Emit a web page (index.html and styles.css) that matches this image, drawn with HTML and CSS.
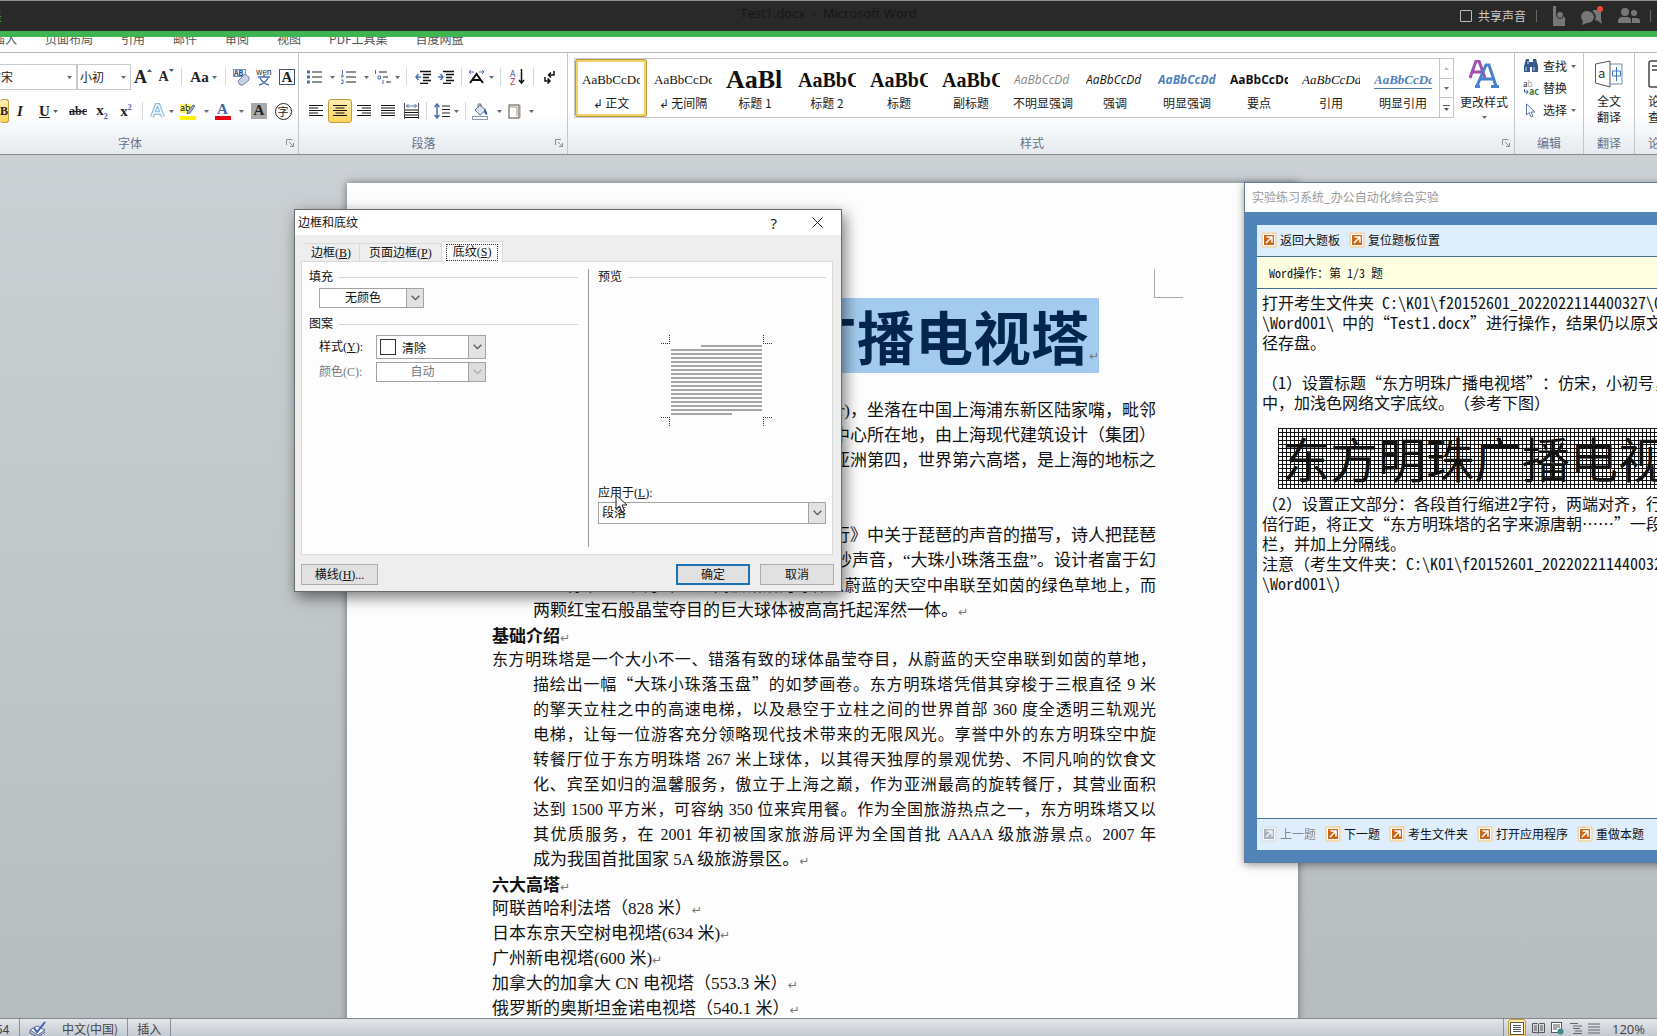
FILE: index.html
```html
<!DOCTYPE html>
<html lang="zh-CN">
<head>
<meta charset="utf-8">
<title>Test1.docx - Microsoft Word</title>
<link rel="stylesheet" href="styles.css">
</head>
<body>
<svg width="0" height="0" class="defs" aria-hidden="true">
  <symbol id="caret" viewBox="0 0 5 3"><path d="M0 0h5L2.500 3z" fill="#666b73"/></symbol>
  <symbol id="chev" viewBox="0 0 9 6"><path d="M.7.8 4.500 4.600 8.300.8" fill="none" stroke="currentColor" stroke-width="1.300"/></symbol>
  <symbol id="launch" viewBox="0 0 8 8"><path d="M.5 6V.5H6M3 3l4 4M7.500 4v3.500H4" fill="none" stroke="#8a919b"/></symbol>
  <symbol id="go" viewBox="0 0 16 16"><rect width="16" height="16" rx="2" fill="#f3d9b8"/><rect x="2" y="2" width="12" height="12" fill="#fff"/><rect x="3" y="3" width="10" height="10" fill="#c9681a"/><path d="M5.500 5H11v5.500M11 5 5 11" fill="none" stroke="#fff" stroke-width="1.500"/></symbol>
</svg>

<header class="sharebar">
  <span class="live">是</span>
  <span class="doc-title">Test1.docx&nbsp; -&nbsp; Microsoft Word</span>
  <div class="share-tools">
    <label class="share"><input type="checkbox">共享声音</label>
    <i class="bar"></i>
    <svg width="14" height="20" viewBox="0 0 14 20"><path d="M1 0h3v10h2a5 4 0 0 1 7 5v5H1z" fill="#777"/><circle cx="8" cy="9" r="3.500" fill="#777" stroke="#292929"/></svg>
    <svg width="24" height="20" viewBox="0 0 24 20"><path d="M7 5c4 0 7 3 7 6s-3 6-7 6l-5 2 1-4c-4-4-1-10 4-10z" fill="#777"/><path d="M13 4h8v9l1 5-4-3-3-1c2-4 0-7-2-8z" fill="#777"/><circle cx="20" cy="3" r="3" fill="#f04a3e"/></svg>
    <svg width="22" height="18" viewBox="0 0 22 18"><circle cx="7" cy="5" r="4" fill="#777"/><circle cx="16" cy="6" r="3" fill="#777"/><path d="M0 16v-2q0-4 5-4h4q4 0 4 4v2zM14 16v-5h4q4 0 4 3v2z" fill="#777"/></svg>
    <i class="bar"></i>
  </div>
</header>

<nav class="tabs">
  <a href="#">插入</a><a href="#">页面布局</a><a href="#">引用</a><a href="#">邮件</a><a href="#">审阅</a><a href="#">视图</a><a href="#">PDF工具集</a><a href="#">百度网盘</a>
</nav>

<section class="ribbon">
  <div class="group g-font">
    <div class="rows">
      <div class="row">
        <div class="box box-font"><input aria-label="字体" value="仿宋"><svg width="5" height="3"><use href="#caret"/></svg></div>
        <div class="box box-size"><input aria-label="字号" value="小初"><svg width="5" height="3"><use href="#caret"/></svg></div>
        <button class="t m serif big">A<svg class="up" width="5" height="3" viewBox="0 0 5 3"><path d="M0 3h5L2.500 0z" fill="#3d5a85"/></svg></button>
        <button class="t s serif mid">A<svg class="up" width="5" height="3" viewBox="0 0 5 3"><path d="M0 0h5L2.500 3z" fill="#3d5a85"/></svg></button>
        <i class="sep"></i>
        <button class="t l serif aa">Aa<svg width="5" height="3"><use href="#caret"/></svg></button>
        <i class="sep"></i>
        <button class="t s"><svg width="17" height="17" viewBox="0 0 17 17"><rect x=".5" y=".5" width="12" height="7" fill="#eef3fa" stroke="#7d93b5"/><text x="1" y="7" font-size="7" font-weight="700" fill="#27406b">AB</text><path d="m5 12 7-7 4 3v3l-6 5H7z" fill="#c3cfe2" stroke="#7486a6"/></svg></button>
        <button class="t m"><svg width="17" height="17" viewBox="0 0 17 17"><text x="0" y="6" font-size="8" fill="#222">wén</text><path d="M2 8h12M8 6v2M4 9c2 4 5 6 9 7M12 9c-2 4-5 6-9 7" fill="none" stroke="#4a6fae" stroke-width="1.500"/></svg></button>
        <button class="t s"><span class="framed serif">A</span></button>
      </div>
      <div class="row">
        <button class="t bold on serif"><b>B</b></button>
        <button class="t s serif aa"><i>I</i></button>
        <button class="t l serif aa"><u>U</u><svg width="5" height="3"><use href="#caret"/></svg></button>
        <button class="t m serif small"><s>abc</s></button>
        <button class="t m serif aa"><span>x<sub>2</sub></span></button>
        <button class="t m serif aa"><span>x<sup>2</sup></span></button>
        <i class="sep"></i>
        <button class="t c"><svg width="15" height="16" viewBox="0 0 15 16"><path d="M2 14 6.500 2h2L13 14M4 10h7" fill="none" stroke="#8fbfe3" stroke-width="4"/><path d="M2 14 6.500 2h2L13 14M4 10h7" fill="none" stroke="#f4faff" stroke-width="1.500"/></svg><svg width="5" height="3"><use href="#caret"/></svg></button>
        <button class="t l"><svg width="16" height="17" viewBox="0 0 16 17"><rect y="1" width="11" height="9" fill="#fff36b"/><rect y="13" width="16" height="4" fill="#fff100"/><text x="0" y="8" font-size="9" fill="#111">ab</text><path d="m15 3-5 7-3 1 1-3 5-6z" fill="#9eaccb" stroke="#5b6c91"/></svg><svg width="5" height="3"><use href="#caret"/></svg></button>
        <button class="t l"><svg width="16" height="17" viewBox="0 0 16 17"><rect y="13" width="16" height="4" fill="#e60012"/><text class="serif-t" x="2" y="11" font-size="15" font-weight="700" fill="#3f63a5">A</text></svg><svg width="5" height="3"><use href="#caret"/></svg></button>
        <button class="t m"><span class="shaded serif">A</span></button>
        <button class="t m"><span class="circled">字</span></button>
      </div>
    </div>
    <footer>字体<svg class="launch" width="8" height="8"><use href="#launch"/></svg></footer>
  </div>

  <div class="group g-para">
    <div class="rows">
      <div class="row">
        <button class="t l"><svg width="15" height="14" viewBox="0 0 15 14"><path d="M5 2h10M5 7h10M5 12h10" stroke="#222"/><path d="M0 2h3M0 7h3M0 12h3" stroke="#4a72ae" stroke-width="3"/></svg><svg width="5" height="3"><use href="#caret"/></svg></button>
        <button class="t l"><svg width="15" height="14" viewBox="0 0 15 14"><path d="M5 2h10M5 7h10M5 12h10" stroke="#222"/><path d="M1.500 0v4M0 5h2v2H0M0 10h2v3.500H0" fill="none" stroke="#4a72ae"/></svg><svg width="5" height="3"><use href="#caret"/></svg></button>
        <button class="t c"><svg width="17" height="14" viewBox="0 0 17 14"><path d="M5 2h8M9 7h5M12 12h5" stroke="#222"/><path d="M1.500 0v4M4 6h2.500v3H4zM9 10v4" fill="none" stroke="#4a72ae"/></svg><svg width="5" height="3"><use href="#caret"/></svg></button>
        <i class="sep"></i>
        <button class="t m"><svg width="16" height="14" viewBox="0 0 16 14"><path d="M5 1.500h11M8 4.500h8M8 7.500h6M8 10.500h8M5 13.500h8" stroke="#111" stroke-width="1.500"/><path d="M6 7H1M3.500 4 1 7l2.500 3" fill="none" stroke="#4a72ae" stroke-width="1.500"/></svg></button>
        <button class="t s"><svg width="16" height="14" viewBox="0 0 16 14"><path d="M5 1.500h11M8 4.500h8M8 7.500h6M8 10.500h8M5 13.500h8" stroke="#111" stroke-width="1.500"/><path d="M0 7h5M2.500 4 5 7l-2.500 3" fill="none" stroke="#4a72ae" stroke-width="1.500"/></svg></button>
        <i class="sep"></i>
        <button class="t c"><svg width="17" height="14" viewBox="0 0 17 14"><path d="M2 13 8.500 4 15 13M4 10h9" fill="none" stroke="#111" stroke-width="2"/><path d="M1 2h5M11 2h5M3 0 1 2l2 2M14 0l2 2-2 2" fill="none" stroke="#4a72ae"/></svg><svg width="5" height="3"><use href="#caret"/></svg></button>
        <i class="sep"></i>
        <button class="t m"><svg width="15" height="16" viewBox="0 0 15 16"><text x="0" y="8" font-size="9" fill="#3f63a5">A</text><text x="0" y="16" font-size="9" fill="#a33">Z</text><path d="M11.500 0v14M9 11l2.500 3 2.500-3" fill="none" stroke="#111" stroke-width="1.500"/></svg></button>
        <i class="sep"></i>
        <button class="t s"><svg width="11" height="14" viewBox="0 0 11 14"><path d="M10 1v4H5M7 2.500 4.500 5 7 7.500M1 7v4h4M3.500 8.500 6 11l-2.500 2.500" fill="none" stroke="#111" stroke-width="1.500"/></svg></button>
      </div>
      <div class="row">
        <button class="t m"><svg width="14" height="12" viewBox="0 0 14 12"><path d="M0 .5h14M0 3h9M0 5.500h14M0 8h9M0 10.500h14" stroke="#111"/></svg></button>
        <button class="t m on"><svg width="14" height="12" viewBox="0 0 14 12"><path d="M0 .5h14M2.500 3h9M0 5.500h14M2.500 8h9M0 10.500h14" stroke="#111"/></svg></button>
        <button class="t m"><svg width="14" height="12" viewBox="0 0 14 12"><path d="M0 .5h14M5 3h9M0 5.500h14M5 8h9M0 10.500h14" stroke="#111"/></svg></button>
        <button class="t m"><svg width="14" height="12" viewBox="0 0 14 12"><path d="M0 .5h14M0 3h14M0 5.500h14M0 8h14M0 10.500h14" stroke="#111"/></svg></button>
        <button class="t s"><svg width="15" height="16" viewBox="0 0 15 16"><path d="M1 7h13M1 9.500h13M1 12h13M1 14.500h13" stroke="#111"/><path d="M.5 0v16M14.500 0v16" stroke="#555"/><path d="M2 3h11M4.500 1l-2 2 2 2M10.500 1l2 2-2 2" fill="none" stroke="#4a72ae"/></svg></button>
        <i class="sep"></i>
        <button class="t c"><svg width="16" height="16" viewBox="0 0 16 16"><path d="M8 3h8M8 6.500h8M8 10h8M8 13.500h8" stroke="#222"/><path d="M3 1v14M.5 4 3 1l2.500 3M.5 12 3 15l2.500-3" fill="none" stroke="#4a72ae" stroke-width="1.500"/></svg><svg width="5" height="3"><use href="#caret"/></svg></button>
        <i class="sep"></i>
        <button class="t l"><svg width="17" height="17" viewBox="0 0 17 17"><path d="m3 7 5-5 6 5-6 5z" fill="#dbe4f2" stroke="#5c7095"/><path d="M6 5V1h3v3" fill="none" stroke="#777"/><path d="M12 6q4 2 3 6-3-1-3-4" fill="#3f63a5"/><rect x=".5" y="13.500" width="15" height="3" fill="#fff" stroke="#8b97ad"/></svg><svg width="5" height="3"><use href="#caret"/></svg></button>
        <button class="t l"><svg width="13" height="15" viewBox="0 0 13 15"><rect x="1" y="1" width="10" height="13" fill="#fff" stroke="#55483c"/><path d="M12 1v13M2 3h7v9" stroke="#a5978c" fill="none"/></svg><svg width="5" height="3"><use href="#caret"/></svg></button>
      </div>
    </div>
    <footer>段落<svg class="launch" width="8" height="8"><use href="#launch"/></svg></footer>
  </div>

  <div class="group g-style">
    <div class="rows style-rows">
      <div class="gallery">
        <button class="style sel"><span class="smp serif">AaBbCcDd</span><span>↲ 正文</span></button>
        <button class="style"><span class="smp serif">AaBbCcDd</span><span>↲ 无间隔</span></button>
        <button class="style"><span class="smp serif h1s">AaBl</span><span>标题 1</span></button>
        <button class="style"><span class="smp serif h2s">AaBbC</span><span>标题 2</span></button>
        <button class="style"><span class="smp serif h2s">AaBbC</span><span>标题</span></button>
        <button class="style"><span class="smp serif h2s">AaBbC</span><span>副标题</span></button>
        <button class="style"><span class="smp it pale">AaBbCcDd</span><span>不明显强调</span></button>
        <button class="style"><span class="smp it">AaBbCcDd</span><span>强调</span></button>
        <button class="style"><span class="smp it blue">AaBbCcDd</span><span>明显强调</span></button>
        <button class="style"><span class="smp strong">AaBbCcDd</span><span>要点</span></button>
        <button class="style"><span class="smp serif it">AaBbCcDd</span><span>引用</span></button>
        <button class="style"><span class="smp serif it blue under">AaBbCcDd</span><span>明显引用</span></button>
        <div class="scroller">
          <button aria-label="上"><svg width="5" height="3" viewBox="0 0 5 3"><path d="M0 3h5L2.500 0z" fill="#bbb"/></svg></button>
          <button aria-label="下"><svg width="5" height="3"><use href="#caret"/></svg></button>
          <button aria-label="更多"><svg width="7" height="6" viewBox="0 0 7 6"><path d="M0 .5h7" stroke="#555"/><path d="M1 3h5L3.500 6z" fill="#555"/></svg></button>
        </div>
      </div>
      <button class="tall"><svg width="30" height="28" viewBox="0 0 30 28"><path d="m1 18 6-17h3l6 17M4 12h9" fill="none" stroke="#a04fae" stroke-width="3"/><path d="M8 26 17 5h3l7 21M12 19h12M6 26.500h5M22 26.500h8" fill="none" stroke="#4781cc" stroke-width="3"/></svg><span>更改样式</span><svg width="5" height="3"><use href="#caret"/></svg></button>
    </div>
    <footer>样式<svg class="launch" width="8" height="8"><use href="#launch"/></svg></footer>
  </div>

  <div class="group g-edit">
    <div class="rows edit-rows">
      <button><svg width="16" height="14" viewBox="0 0 16 14"><path d="M3 0h3v3h4V0h3l2 7v6H9V8H7v5H1V7z" fill="#36588f"/><path d="M3 8v4M11 8v4M5 2v3" stroke="#c5d7f2"/></svg>查找<svg width="5" height="3"><use href="#caret"/></svg></button>
      <button><svg width="16" height="16" viewBox="0 0 16 16"><text x="0" y="7" font-size="8" fill="#222">a<tspan fill="#999">b</tspan></text><text x="6" y="15" font-size="9" font-weight="700" fill="#2d7a3a">ac</text><path d="M1.500 9v3H5M3.500 10 5 12l-1.500 2" fill="none" stroke="#3f63a5"/></svg>替换</button>
      <button><svg width="16" height="15" viewBox="0 0 16 15"><path d="M3.500 1v11l2.500-2.500 2 4.500 2-1-2-4h4z" fill="#fff" stroke="#5b74a0"/></svg>选择<svg width="5" height="3"><use href="#caret"/></svg></button>
    </div>
    <footer>编辑</footer>
  </div>

  <div class="group g-trans">
    <div class="rows">
      <button class="tall two"><svg width="28" height="28" viewBox="0 0 28 28"><path d="M15 1v26L.5 23V4z" fill="#fff" stroke="#555"/><path d="M15 4h12v20H15" fill="none" stroke="#6c8fb8"/><text x="3" y="18" font-size="13" fill="#333">a</text><path d="M17.500 11h8v5h-8zM21.500 7v14" fill="none" stroke="#3b74b5"/></svg><span>全文<br>翻译</span></button>
    </div>
    <footer>翻译</footer>
  </div>
  <div class="group g-paper">
    <div class="rows">
      <button class="tall two"><svg width="24" height="28" viewBox="0 0 24 28"><rect x="1" y="1" width="22" height="26" rx="2" fill="#fff" stroke="#444" stroke-width="1.500"/><path d="M4 6h14M4 10h14" stroke="#444" stroke-width="1.500"/></svg><span>论文<br>查重</span></button>
    </div>
    <footer>论文</footer>
  </div>
</section>

<main class="desk">
  <article class="page">
    <i class="crop"></i>
    <h1><span>东方明珠广播电视塔<small>↵</small></span></h1>
    <p class="tail"><span>Tower)，坐落在中国上海浦东新区陆家嘴，毗邻</span><span>中心所在地，由上海现代建筑设计（集团）</span><span>亚洲第四，世界第六高塔，是上海的地标之</span></p>
    <p class="tail gap"><span>行》中关于琵琶的声音的描写，诗人把琵琶</span><span>妙声音，<q>大珠小珠落玉盘</q>。设计者富于幻</span></p>
    <p class="body"><span>想地将十一个大小不一、高低错落的球体从蔚蓝的天空中串联至如茵的绿色草地上，而</span><span class="end">两颗红宝石般晶莹夺目的巨大球体被高高托起浑然一体。<small>↵</small></span></p>
    <h2>基础介绍<small>↵</small></h2>
    <p class="body"><span class="first">东方明珠塔是一个大小不一、错落有致的球体晶莹夺目，从蔚蓝的天空串联到如茵的草地，</span><span>描绘出一幅<q>大珠小珠落玉盘</q>的如梦画卷。东方明珠塔凭借其穿梭于三根直径 9 米</span><span>的擎天立柱之中的高速电梯，以及悬空于立柱之间的世界首部 360 度全透明三轨观光</span><span>电梯，让每一位游客充分领略现代技术带来的无限风光。享誉中外的东方明珠空中旋</span><span>转餐厅位于东方明珠塔 267 米上球体，以其得天独厚的景观优势、不同凡响的饮食文</span><span>化、宾至如归的温馨服务，傲立于上海之巅，作为亚洲最高的旋转餐厅，其营业面积</span><span>达到 1500 平方米，可容纳 350 位来宾用餐。作为全国旅游热点之一，东方明珠塔又以</span><span>其优质服务，在 2001 年初被国家旅游局评为全国首批 AAAA 级旅游景点。2007 年</span><span class="end">成为我国首批国家 5A 级旅游景区。<small>↵</small></span></p>
    <h2>六大高塔<small>↵</small></h2>
    <p>阿联酋哈利法塔（828 米）<small>↵</small></p>
    <p>日本东京天空树电视塔(634 米)<small>↵</small></p>
    <p>广州新电视塔(600 米)<small>↵</small></p>
    <p>加拿大的加拿大 CN 电视塔（553.3 米）<small>↵</small></p>
    <p>俄罗斯的奥斯坦金诺电视塔（540.1 米）<small>↵</small></p>
  </article>
</main>

<footer class="status">
  <span class="cell num">54</span>
  <span class="cell"><svg width="18" height="16" viewBox="0 0 18 16"><path d="m1 9 7-4 8 4-7 5z" fill="#fff" stroke="#4a5f92"/><path d="M1 10v2l8 4 7-5" fill="none" stroke="#4a5f92"/><path d="m5 7 3 4 8-10" fill="none" stroke="#3d5fae" stroke-width="2"/></svg><span>中文(中国)</span></span>
  <span class="cell">插入</span>
  <div class="views">
    <button class="on" aria-label="页面视图"><svg width="14" height="13" viewBox="0 0 14 13"><rect x=".5" y=".5" width="13" height="12" fill="#fff" stroke="#555"/><path d="M3 3.500h8M3 5.500h8M3 7.500h8M3 9.500h8" stroke="#555"/></svg></button>
    <button aria-label="阅读版式"><svg width="13" height="13" viewBox="0 0 13 13"><path d="M.5 1.500h5l1 1 1-1h5v9h-5l-1 1-1-1h-5zM6.500 2v9M2 4h3M2 6h3M2 8h3M8 4h3M8 6h3M8 8h3" fill="none" stroke="#555"/></svg></button>
    <button aria-label="Web 版式"><svg width="13" height="13" viewBox="0 0 13 13"><rect x=".5" y=".5" width="10" height="10" fill="#fff" stroke="#555"/><path d="M2 3h7M2 5h7M2 7h4" stroke="#555"/><circle cx="9.500" cy="9.500" r="3" fill="#3f8a8a"/></svg></button>
    <button aria-label="大纲"><svg width="12" height="11" viewBox="0 0 12 11"><path d="M0 .5h8M3 3h9M3 5.500h7M5 8h7M3 10.500h9" stroke="#666"/></svg></button>
    <button aria-label="草稿"><svg width="12" height="11" viewBox="0 0 12 11"><path d="M0 1h12M0 4h12M0 7h12M0 10h12" stroke="#666"/></svg></button>
    <span class="zoom">120%</span>
    <svg width="14" height="14" viewBox="0 0 14 14"><circle cx="7" cy="7" r="6" fill="#f4f5f7" stroke="#777"/><path d="M4 7h6" stroke="#555"/></svg>
  </div>
</footer>

<section class="dialog" role="dialog" aria-label="边框和底纹">
  <header><span>边框和底纹</span><button class="help" aria-label="帮助">?</button><button class="close" aria-label="关闭"><svg width="11" height="11" viewBox="0 0 11 11"><path d="m.5.5 10 10M10.500.5l-10 10" stroke="#222"/></svg></button></header>
  <div class="dtabs"><button>边框(<u>B</u>)</button><button>页面边框(<u>P</u>)</button><button class="cur"><span>底纹(<u>S</u>)</span></button></div>
  <div class="sheet">
    <div class="left">
      <h3>填充</h3>
      <div class="combo fill"><select aria-label="填充"><option>无颜色</option></select><span class="arr"><svg width="9" height="6"><use href="#chev"/></svg></span></div>
      <h3>图案</h3>
      <div class="field"><label for="pat">样式(<u>Y</u>):</label><div class="combo pat"><i class="swatch"></i><select id="pat"><option>清除</option></select><span class="arr"><svg width="9" height="6"><use href="#chev"/></svg></span></div></div>
      <div class="field off"><label for="col">颜色(C):</label><div class="combo col"><select id="col" disabled><option>自动</option></select><span class="arr"><svg width="9" height="6"><use href="#chev"/></svg></span></div></div>
    </div>
    <div class="right">
      <h3>预览</h3>
      <div class="preview">
        <svg width="112" height="92" viewBox="0 0 112 92"><path d="M0 8.500h9M8.500 0v9M102.500 0v9M102 8.500h9M0 82.500h9M8.500 82v9M102.500 82v9M102 82.500h9" stroke="#333" stroke-dasharray="1 1"/><path d="M40 11h61M10 15h91M10 19h91M10 23h91M10 27h91M10 31h91M10 35h91M10 39h91M10 43h91M10 47h91M10 51h91M10 55h91M10 59h91M10 63h91M10 67h91M10 71h91M10 75h91M10 79h61" stroke="#a6a6a6" stroke-width="2"/></svg>
      </div>
      <label for="apply">应用于(<u>L</u>):</label>
      <div class="combo apply"><select id="apply"><option>段落</option></select><span class="arr"><svg width="9" height="6"><use href="#chev"/></svg></span></div>
    </div>
  </div>
  <div class="actions"><button class="hline">横线(<u>H</u>)...</button><button class="ok">确定</button><button>取消</button></div>
  <svg class="pointer" width="13" height="20" viewBox="0 0 13 20"><path d="M1 1v14l3.500-3 2.500 6 2.500-1L7 11h5z" fill="#fff" stroke="#222"/></svg>
</section>

<section class="exam">
  <header>实验练习系统_办公自动化综合实验</header>
  <div class="frame">
    <div class="bar-top"><button><svg width="16" height="16"><use href="#go"/></svg>返回大题板</button><button><svg width="16" height="16"><use href="#go"/></svg>复位题板位置</button></div>
    <div class="which"><span class="hw">Word</span>操作：第<span class="hw"> 1/3 </span>题</div>
    <div class="task">
      <p>打开考生文件夹<span class="hw"> C:\K01\f20152601_2022022114400327\0</span></p>
      <p><span class="hw">\Word001\ </span>中的<q><span class="hw">Test1.docx</span></q>进行操作，结果仍以原文件</p>
      <p>径存盘。</p>
      <p>&nbsp;</p>
      <p>（<span class="hw">1</span>）设置标题<q>东方明珠广播电视塔</q>：仿宋，小初号，</p>
      <p>中，加浅色网络文字底纹。（参考下图）</p>
      <div class="sample">东方明珠广播电视塔</div>
      <p>（<span class="hw">2</span>）设置正文部分：各段首行缩进<span class="hw">2</span>字符，两端对齐，行</p>
      <p>倍行距，将正文<q>东方明珠塔的名字来源唐朝……</q>一段</p>
      <p>栏，并加上分隔线。</p>
      <p>注意（考生文件夹：<span class="hw">C:\K01\f20152601_2022022114400327</span></p>
      <p><span class="hw">\Word001\</span>）</p>
    </div>
    <div class="bar-bot"><button disabled><svg width="16" height="16"><use href="#go"/></svg>上一题</button><button><svg width="16" height="16"><use href="#go"/></svg>下一题</button><button><svg width="16" height="16"><use href="#go"/></svg>考生文件夹</button><button><svg width="16" height="16"><use href="#go"/></svg>打开应用程序</button><button><svg width="16" height="16"><use href="#go"/></svg>重做本题</button></div>
  </div>
</section>
</body>
</html>
```

FILE: styles.css
```css
* { box-sizing: border-box; }
body {
  margin: 0; height: 100vh; overflow: hidden; position: relative;
  display: flex; flex-direction: column;
  font: 12px/16px "Noto Sans CJK SC", sans-serif; color: #222; background: #fdfdfd;
  text-spacing-trim: space-all;
}
button, input, select { font: inherit; color: inherit; border: 0; background: none; padding: 0; margin: 0; border-radius: 0; }
button { white-space: nowrap; }
svg { flex: none; }
.defs { position: absolute; }
.serif, .serif-t { font-family: "Liberation Serif", "Noto Sans CJK SC", serif; }
q { quotes: "“" "”"; }
q::before, q::after { font-family: "Noto Sans CJK SC", sans-serif; line-height: 0; }

/* screen-sharing bar */
.sharebar {
  flex: none; height: 37px; background: #292929; border-top: 1px solid #8e9390; border-bottom: 6px solid #3fb551;
  display: grid; grid-template-columns: 1fr auto 1fr; align-items: center;
}
.live { color: #3fb551; width: 2px; overflow: hidden; direction: rtl; white-space: nowrap; }
.doc-title { color: #161616; font: 13px/20px "Open Sans", sans-serif; padding-bottom: 6px; }
.share-tools { display: flex; justify-content: flex-end; align-items: center; gap: 14px; padding-right: 5px; color: #ccc; }
.share { display: flex; align-items: center; gap: 6px; }
.share input { appearance: none; width: 12px; height: 12px; border: 1px solid #bbb; border-radius: 1px; }
.bar { width: 1px; height: 12px; background: #666; margin: 0 1px 0 -4px; }

.tabs {
  flex: none; height: 16px; overflow: hidden; display: flex; gap: 28px; background: #fff;
  border-bottom: 1px solid #b5b9bd; align-items: flex-end;
}
.tabs a { color: #555; text-decoration: none; line-height: 22px; height: 24px; }
.tabs a:first-child { margin-left: -7px; }

/* ribbon */
.ribbon { flex: none; height: 102px; display: flex; background: linear-gradient(#fff 60%, #e6eaee); border-bottom: 1px solid #84898e; overflow: hidden; }
.group { flex: none; display: flex; flex-direction: column; border-right: 1px solid #c3c7cc; }
.group > footer { flex: none; height: 22px; padding-top: 3px; text-align: center; color: #66728a; position: relative; }
.launch { position: absolute; right: 4px; top: 7px; }
.rows { flex: 1; min-height: 0; display: flex; flex-direction: column; }
.g-font { width: 299px; }
.g-font > footer { padding-right: 38px; }
.g-para { width: 269px; padding-left: 5px; }
.g-para > footer { padding-right: 24px; }
.g-style { flex: 1 0 auto; }
.g-style > footer { padding-right: 18px; }
.g-edit { width: 69px; }
.g-trans { width: 51px; }
.g-paper { width: 50px; border: 0; }
.row { display: flex; align-items: center; height: 34px; }
.row:first-child { margin-top: 7px; }
.box { display: flex; align-items: center; justify-content: space-between; height: 26px; border: 1px solid #c6cad0; background: #fff; padding: 0 4px 0 2px; }
.box input { width: 40px; }
.box-font { width: 78px; margin-left: -1px; }
.box-font input { margin-left: -13px; }
.box-size { width: 54px; }
.box-size input { width: 30px; }
.t { flex: none; height: 24px; display: flex; align-items: center; justify-content: center; gap: 2px; }
.s { width: 22px; }
.m { width: 24px; }
.c { width: 30px; gap: 4px; }
.l { width: 35px; gap: 8px; }
.g-para .l { width: 34px; }
.l.aa { gap: 3px; }
.big { font-size: 18px; font-weight: 700; gap: 0; }
.mid { font-size: 14px; font-weight: 700; gap: 0; }
.up { align-self: flex-start; margin-top: 4px; }
.aa { font-size: 15px; font-weight: 700; }
.small { font-size: 12px; font-weight: 700; }
sub, sup { font-size: 8px; line-height: 8px; color: #3f63a5; }
.sep { flex: none; width: 1px; height: 18px; background: #d5d8dc; margin: 0 4px; }
.on { background: linear-gradient(#fdeeb0, #fbd55c); border: 1px solid #c39b3c; border-radius: 3px; }
.bold { width: 9px; border-left: 0; overflow: hidden; justify-content: flex-end; }
.framed, .shaded { width: 16px; height: 16px; font: 700 15px/15px "Liberation Serif", serif; }
.framed { border: 1px solid #3f557a; line-height: 14px; }
.shaded { background: #aaa; }
.circled { width: 17px; height: 17px; border: 1px solid #222; border-radius: 50%; font-size: 11px; line-height: 14px; }

.style-rows { flex-direction: row; padding: 5px 6px 0; gap: 6px; }
.gallery { display: flex; height: 60px; border: 1px solid #c3c7cc; background: #fff; }
.style { width: 72px; display: flex; flex-direction: column; align-items: center; gap: 2px; padding: 9px 4px 0; overflow: hidden; border: 1px solid transparent; }
.style.sel { border: 3px solid #f3d267; border-radius: 3px; outline: 1px solid #b79a4a; outline-offset: -1px; padding: 7px 2px 0; }
.smp { width: 58px; height: 24px; line-height: 22px; font-size: 13px; overflow: hidden; text-align: left; color: #111; }
.smp:not(.serif) { font-family: "Open Sans", sans-serif; font-size: 12px; }
.smp.h1s { font-size: 26px; font-weight: 700; }
.smp.h2s { font-size: 20px; font-weight: 700; }
.smp.it { font-style: italic; }
.smp.strong { font-weight: 700; }
.smp.pale { color: #888; }
.smp.blue { color: #4f81bd; font-weight: 700; }
.smp.under { text-decoration: underline; text-underline-offset: 4px; }
.scroller { width: 14px; display: flex; flex-direction: column; border-left: 1px solid #c3c7cc; }
.scroller button { flex: 1; display: flex; align-items: center; justify-content: center; border-top: 1px solid #c3c7cc; }
.scroller button:first-child { border-top: 0; }
.tall { display: flex; flex-direction: column; align-items: center; gap: 6px; padding-top: 2px; height: 68px; }
.two { margin: 5px auto 0; gap: 5px; height: 74px; }
.edit-rows { padding: 2px 8px; }
.edit-rows button { display: flex; align-items: center; gap: 4px; height: 22px; }

/* document */
.desk { flex: 1; min-height: 0; overflow: hidden; display: flex; justify-content: center; padding: 28px 12px 0 0; background: linear-gradient(#cbd0d4, #b7bdbf); }
.page { position: relative; flex: none; width: 58%; min-width: 951px; max-width: 951px; height: 1200px; background: #fdfdfd; padding: 115px 142px 0 145px; box-shadow: 0 0 8px #686d70; font: 17px/25px "Liberation Serif", "Noto Sans CJK SC", serif; color: #111; }
.crop { position: absolute; right: 115px; top: 86px; width: 29px; height: 29px; border-left: 1px solid #aaa; border-bottom: 1px solid #aaa; }
.page h1 { margin: 0 0 25px; text-align: center; padding-left: 18px; font: 700 58px/75px "Noto Sans CJK SC", sans-serif; color: #04264e; }
.page h1 span { display: inline-block; height: 75px; background: #a2cbee; white-space: nowrap; }
.page small { font: 12px/12px "DejaVu Sans", sans-serif; color: #777; }
.page h2 { margin: 0; font: 700 17px/24px "Noto Sans CJK SC", sans-serif; }
.page p { margin: 0; white-space: nowrap; }
.page p span { display: block; height: 25px; }
.tail { text-align: right; padding-left: 240px; }
.tail q::before, .tail q::after { font-family: inherit; }
.page .gap { margin-top: 50px; }
.body { padding-left: 41px; font-size: 16px; }
.body span { text-align: justify; text-align-last: justify; white-space: normal; }
.body .first { margin-left: -41px; }
.body .end { text-align-last: left; font-size: 17px; }

.status { flex: none; height: 18px; display: flex; align-items: center; overflow: hidden; border-top: 1px solid #84898e; background: linear-gradient(#e3e6ea, #c5cad2); position: relative; color: #444; }
.cell { display: flex; align-items: center; gap: 15px; padding: 3px 9px 0; border-right: 1px solid #8b9097; height: 18px; }
.cell.num { padding-left: 0; margin-left: -4px; width: 24px; padding-right: 10px; }
.views { margin-left: auto; margin-right: -14px; display: flex; align-items: center; gap: 6px; border-left: 1px solid #8b9097; padding: 2px 0 0 4px; height: 18px; }
.views button { display: flex; align-items: center; }
.views .on { padding: 2px 1px; }
.zoom { font: 13px/16px "Open Sans", sans-serif; padding: 0 6px; }

/* borders and shading dialog */
.dialog { position: absolute; left: 294px; top: 209px; width: 548px; border: 1px solid #6b6b6b; background: #eee; box-shadow: 3px 5px 14px #0008; color: #111; font-family: "Liberation Serif", "Noto Sans CJK SC", serif; }
.dialog > header { display: flex; align-items: center; height: 25px; background: #fff; padding: 0 18px 0 3px; }
.help { margin-left: auto; margin-right: 35px; font: 15px/16px "Open Sans", sans-serif; }
.close { display: flex; }
.dtabs { display: flex; align-items: flex-end; height: 27px; padding-left: 8px; margin-bottom: -1px; position: relative; }
.dtabs button { height: 19px; padding: 0 8px; border: 1px solid #d9d9d9; border-bottom: 0; border-left: 0; }
.dtabs button:nth-child(2) { padding: 0 9px; }
.dtabs .cur { height: 21px; background: #fdfdfd; padding: 1px 4px 0; }
.cur span { display: block; border: 1px dotted #333; padding: 0 6px; line-height: 15px; }
.sheet { display: flex; margin: 0 8px 0 6px; height: 294px; background: #fdfdfd; border: 1px solid #d9d9d9; padding: 7px 6px; }
.left { flex: none; width: 281px; border-right: 1px solid #999; padding-right: 10px; }
.right { flex: 1; padding-left: 9px; }
.sheet h3 { margin: 0; padding-left: 1px; font: inherit; display: flex; align-items: center; gap: 6px; }
.right h3 { padding-left: 0; }
.sheet h3::after { content: ""; flex: 1; height: 1px; background: #d4d4d4; }
.combo { display: flex; align-items: stretch; border: 1px solid #a3a3a3; background: #fff; height: 20px; }
.combo select { flex: 1; min-width: 0; appearance: none; text-align: center; text-align-last: center; opacity: 1; }
.arr { flex: none; width: 17px; border-left: 1px solid #a3a3a3; background: #e2e2e2; display: flex; align-items: center; justify-content: center; color: #555; }
.fill { width: 105px; margin: 3px 0 8px 11px; }
.field { display: flex; align-items: center; padding-left: 11px; margin-top: 3px; }
.field label { width: 57px; }
.field .combo { width: 110px; }
.field .pat { height: 24px; align-items: stretch; }
.pat select { text-align-last: left; padding: 4px 0 0 6px; }
.swatch { width: 16px; height: 16px; margin: 3px 0 0 3px; border: 1px solid #333; background: #fff; }
.off { color: #777; }
.off .arr { color: #aaa; background: #ddd; }
.preview { height: 200px; padding: 50px 0 0 63px; }
.right label { display: block; }
.apply { height: 22px; margin-top: 1px; }
.apply select { text-align-last: left; padding-left: 3px; }
.actions { display: flex; justify-content: flex-end; gap: 10px; padding: 9px 7px 6px 6px; }
.actions button { width: 74px; height: 21px; border: 1px solid #adadad; background: #e1e1e1; line-height: 18px; }
.actions .hline { width: 77px; margin-right: auto; }
.actions .ok { border: 2px solid #1a72b4; line-height: 16px; }
.pointer { position: absolute; left: 320px; top: 284px; }

/* exam panel */
.exam { position: absolute; left: 1244px; right: -16px; top: 182px; border: 1px solid #5f7c9c; background: #5185b9; box-shadow: 0 2px 8px #0006; color: #111; overflow: hidden; }
.exam > header { height: 29px; line-height: 27px; background: #fff; color: #999; padding-left: 7px; }
.frame { margin: 13px 0 12px 12px; background: #fdfdfd; }
.bar-top, .bar-bot { display: flex; align-items: center; gap: 9px; padding: 0 0 2px 4px; height: 32px; background: #dfeefd; border-bottom: 1px solid #4b7193; }
.bar-bot { border-bottom: 0; border-top: 1px solid #4b7193; }
.frame button { display: flex; align-items: center; gap: 3px; flex: none; }
.frame button:disabled { color: #888; filter: grayscale(1); }
.frame button:disabled svg { opacity: .5; }
.which { height: 32px; line-height: 31px; padding-left: 12px; background: #ffffe1; border-bottom: 1px solid #4b7193; white-space: pre; }
.hw { font-feature-settings: "hwid"; }
.task { height: 529px; padding: 3px 0 0 5px; font-size: 16px; line-height: 20px; white-space: nowrap; overflow: hidden; }
.task p { margin: 0; height: 20px; }
.sample {
  margin: 16px 0 4px 16px; height: 61px; padding-left: 4px; font-size: 48px; line-height: 58px;
  background: repeating-linear-gradient(#111 0 1px, transparent 1px 4px), repeating-linear-gradient(90deg, #111 0 1px, #fff 1px 4px);
}
```
